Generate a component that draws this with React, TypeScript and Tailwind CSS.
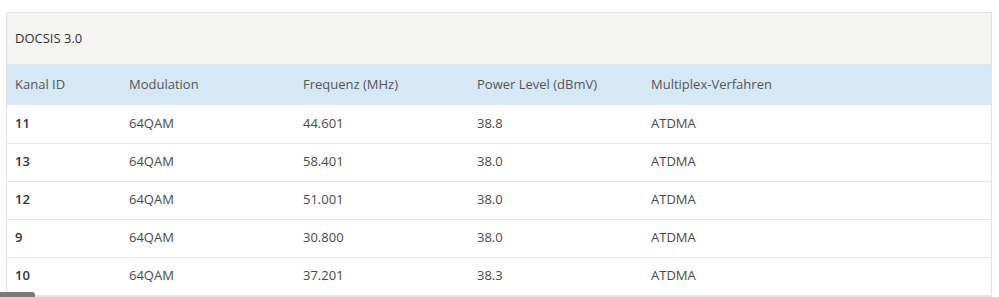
const ROWS = [
  { id: "11", mod: "64QAM", freq: "44.601", power: "38.8", mux: "ATDMA" },
  { id: "13", mod: "64QAM", freq: "58.401", power: "38.0", mux: "ATDMA" },
  { id: "12", mod: "64QAM", freq: "51.001", power: "38.0", mux: "ATDMA" },
  { id: "9", mod: "64QAM", freq: "30.800", power: "38.0", mux: "ATDMA" },
  { id: "10", mod: "64QAM", freq: "37.201", power: "38.3", mux: "ATDMA" },
];

export default function App() {
  return (
    <div
      className="relative h-[297px] w-[999px] overflow-hidden bg-white"
      style={{ fontFamily: "'Open Sans', Lato, sans-serif" }}
    >
      <div className="ml-[6px] mt-[12px] w-[986px] border border-[#e3e3e3] text-[13px] text-[#4a4a4a]">
        {/* Card heading */}
        <div className="flex h-[52px] items-center border-b border-[#e3e3e3] bg-[#f5f5f3] px-2 text-[#333]">
          DOCSIS 3.0
        </div>

        <table className="w-full table-fixed border-collapse">
          <colgroup>
            <col className="w-[114px]" />
            <col className="w-[174px]" />
            <col className="w-[174px]" />
            <col className="w-[174px]" />
            <col />
          </colgroup>
          <thead>
            <tr className="h-[40px] bg-[#d6e7f6] text-left text-[#555]">
              <th className="px-2 font-normal">Kanal ID</th>
              <th className="px-2 font-normal">Modulation</th>
              <th className="px-2 font-normal">Frequenz (MHz)</th>
              <th className="px-2 font-normal">Power Level (dBmV)</th>
              <th className="px-2 font-normal">Multiplex-Verfahren</th>
            </tr>
          </thead>
          <tbody>
            {ROWS.map((r) => (
              <tr key={r.id} className="h-[38px] border-b border-[#e6e6e6]">
                <td className="px-2 font-semibold text-[#333]">{r.id}</td>
                <td className="px-2">{r.mod}</td>
                <td className="px-2">{r.freq}</td>
                <td className="px-2">{r.power}</td>
                <td className="px-2">{r.mux}</td>
              </tr>
            ))}
          </tbody>
        </table>
      </div>

      {/* scrollbar thumb peeking at the bottom */}
      <div className="absolute bottom-0 left-0 h-[5px] w-[35px] rounded-tr-[3px] bg-[#7a7a7a]" />
    </div>
  );
}
